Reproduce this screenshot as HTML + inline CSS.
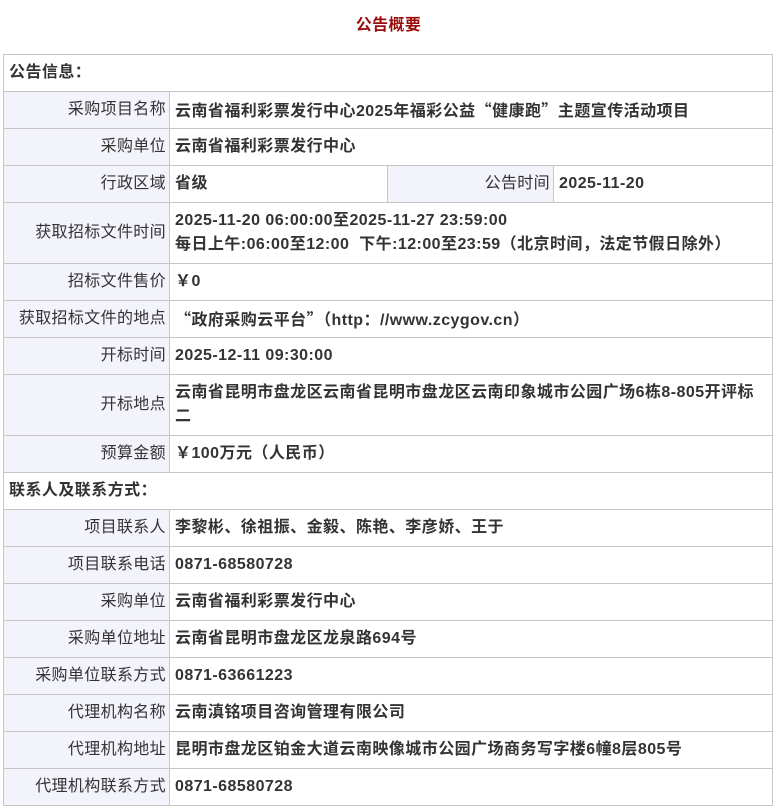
<!DOCTYPE html>
<html><head><meta charset="utf-8"><style>
body{margin:0;background:#fff;font-family:"Liberation Sans","Noto Sans CJK SC",sans-serif;color:#333;}
h1{margin:0;height:54px;line-height:52px;text-align:center;font-size:16px;color:#9b0d0d;font-weight:bold;letter-spacing:0.4px}
table{position:absolute;left:3px;top:54px;width:770px;border-collapse:collapse;table-layout:fixed;}
td{border:1px solid #c6c6c6;font-size:16px;padding:0 6px 0 5px;height:36px;line-height:24px;letter-spacing:0.45px;}
td.l{background:#f3f3fc;text-align:right;padding-right:3px;letter-spacing:0.35px}
td.v{font-weight:bold;}
td.s{font-weight:bold;padding-left:5px;}
.q{font-family:"Noto Sans CJK SC",sans-serif;}
</style></head><body>
<h1>公告概要</h1>
<table>
<colgroup><col style="width:166px"><col style="width:218px"><col style="width:166px"><col></colgroup>
<tr><td class="s" colspan="4">公告信息：</td></tr>
<tr><td class="l">采购项目名称</td><td class="v" colspan="3">云南省福利彩票发行中心2025年福彩公益<span class="q">“</span>健康跑<span class="q">”</span>主题宣传活动项目</td></tr>
<tr><td class="l">采购单位</td><td class="v" colspan="3">云南省福利彩票发行中心</td></tr>
<tr><td class="l">行政区域</td><td class="v">省级</td><td class="l">公告时间</td><td class="v">2025-11-20</td></tr>
<tr><td class="l" style="height:60px">获取招标文件时间</td><td class="v" colspan="3">2025-11-20 06:00:00至2025-11-27 23:59:00<br>每日上午:06:00至12:00&nbsp; 下午:12:00至23:59（北京时间，法定节假日除外）</td></tr>
<tr><td class="l">招标文件售价</td><td class="v" colspan="3">￥0</td></tr>
<tr><td class="l">获取招标文件的地点</td><td class="v" colspan="3"><span class="q">“</span>政府采购云平台<span class="q">”</span>（http：//www.zcygov.cn）</td></tr>
<tr><td class="l">开标时间</td><td class="v" colspan="3">2025-12-11 09:30:00</td></tr>
<tr><td class="l" style="height:60px">开标地点</td><td class="v" colspan="3">云南省昆明市盘龙区云南省昆明市盘龙区云南印象城市公园广场6栋8-805开评标<br>二</td></tr>
<tr><td class="l">预算金额</td><td class="v" colspan="3">￥100万元（人民币）</td></tr>
<tr><td class="s" colspan="4">联系人及联系方式：</td></tr>
<tr><td class="l">项目联系人</td><td class="v" colspan="3">李黎彬、徐祖振、金毅、陈艳、李彦娇、王于</td></tr>
<tr><td class="l">项目联系电话</td><td class="v" colspan="3">0871-68580728</td></tr>
<tr><td class="l">采购单位</td><td class="v" colspan="3">云南省福利彩票发行中心</td></tr>
<tr><td class="l">采购单位地址</td><td class="v" colspan="3">云南省昆明市盘龙区龙泉路694号</td></tr>
<tr><td class="l">采购单位联系方式</td><td class="v" colspan="3">0871-63661223</td></tr>
<tr><td class="l">代理机构名称</td><td class="v" colspan="3">云南滇铭项目咨询管理有限公司</td></tr>
<tr><td class="l">代理机构地址</td><td class="v" colspan="3">昆明市盘龙区铂金大道云南映像城市公园广场商务写字楼6幢8层805号</td></tr>
<tr><td class="l">代理机构联系方式</td><td class="v" colspan="3">0871-68580728</td></tr>
</table>
</body></html>
